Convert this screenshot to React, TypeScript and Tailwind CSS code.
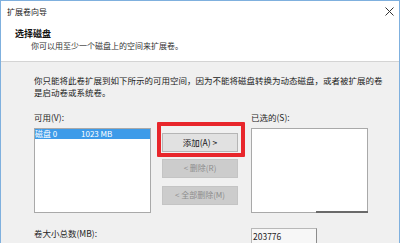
import React from "react";

const font = { fontFamily: '"Noto Sans CJK SC", "Microsoft YaHei", sans-serif' };

export default function App() {
  return (
    <div
      className="relative w-[400px] h-[243px] overflow-hidden bg-[#f0f0f0] border-t border-l border-r border-[#7fb0de] text-[8.5px] text-[#1e1e1e]"
      style={font}
    >
      {/* header */}
      <div className="h-[61px] bg-white border-b border-[#d4d4d4]">
        <div className="h-[22px] flex items-center justify-between pl-[6px] pr-[5px]">
          <span className="leading-[10px] text-[8px] text-[#222]">扩展卷向导</span>
          <svg width="9" height="9" viewBox="0 0 9 9" className="mt-[-1px]">
            <path d="M0.5 0.5 L8.5 8.5 M8.5 0.5 L0.5 8.5" stroke="#333" strokeWidth="1" />
          </svg>
        </div>
        <div className="pl-[14px] mt-[5px] leading-[12px] font-bold text-[9px] text-[#111]">选择磁盘</div>
        <div className="pl-[30px] leading-[11px] text-[8px] text-[#333]">你可以用至少一个磁盘上的空间来扩展卷。</div>
      </div>

      {/* body */}
      <div className="pl-[33px] pt-[13px]">
        <div className="leading-[11.5px] text-[#222]">
          <div>你只能将此卷扩展到如下所示的可用空间，因为不能将磁盘转换为动态磁盘，或者被扩展的卷</div>
          <div>是启动卷或系统卷。</div>
        </div>

        <div className="flex items-start mt-[14px]">
          {/* left column */}
          <div className="flex flex-col">
            <div className="leading-[11px] h-[15.5px]">可用(V):</div>
            <div className="w-[117px] h-[85px] bg-white border border-[#a9a9a9]">
              <div className="h-[10px] bg-[#3d9be9] text-white flex items-center leading-[10px] text-[8px]">
                <span className="w-[46px]">磁盘 0</span>
                <span>1023 MB</span>
              </div>
            </div>
          </div>

          {/* middle column */}
          <div className="relative ml-[11px] w-[76px] pt-[20.5px] flex flex-col">
            <div className="absolute left-[-5px] top-[10px] w-[88px] h-[35px] border-[4.5px] border-[#e8262b] rounded-[1px]" />
            <div className="h-[19px] bg-[#e1e1e1] border border-[#b5b5b5] flex items-center justify-center leading-[10px] text-[#111]">
              添加(A) &gt;
            </div>
            <div className="mt-[7px] h-[19px] bg-[#cccccc] border border-[#c4c4c4] flex items-center justify-center leading-[10px] text-[#8c8c8c] text-[8px]">
              &lt; 删除(R)
            </div>
            <div className="mt-[8px] h-[19px] bg-[#cccccc] border border-[#c4c4c4] flex items-center justify-center leading-[10px] text-[#8c8c8c] text-[8px]">
              &lt; 全部删除(M)
            </div>
          </div>

          {/* right column */}
          <div className="ml-[13px] flex flex-col">
            <div className="leading-[11px] h-[15.5px]">已选的(S):</div>
            <div className="relative w-[117px] h-[85px] bg-white border border-[#a9a9a9]">
              <div className="absolute right-[-1px] bottom-[-1.5px] w-[52px] h-[2px] bg-[#6a6a6a]" />
            </div>
          </div>
        </div>

        {/* bottom row */}
        <div className="flex items-start mt-[15px]">
          <div className="w-[217px] leading-[11px] pt-[0.5px]">卷大小总数(MB):</div>
          <div className="w-[66px] h-[17px] bg-[#f7f7f7] border border-[#b8b8b8] border-r-[#8c8c8c] leading-[14px] pl-[1px] text-[8.5px]">
            203776
          </div>
        </div>
      </div>
    </div>
  );
}
